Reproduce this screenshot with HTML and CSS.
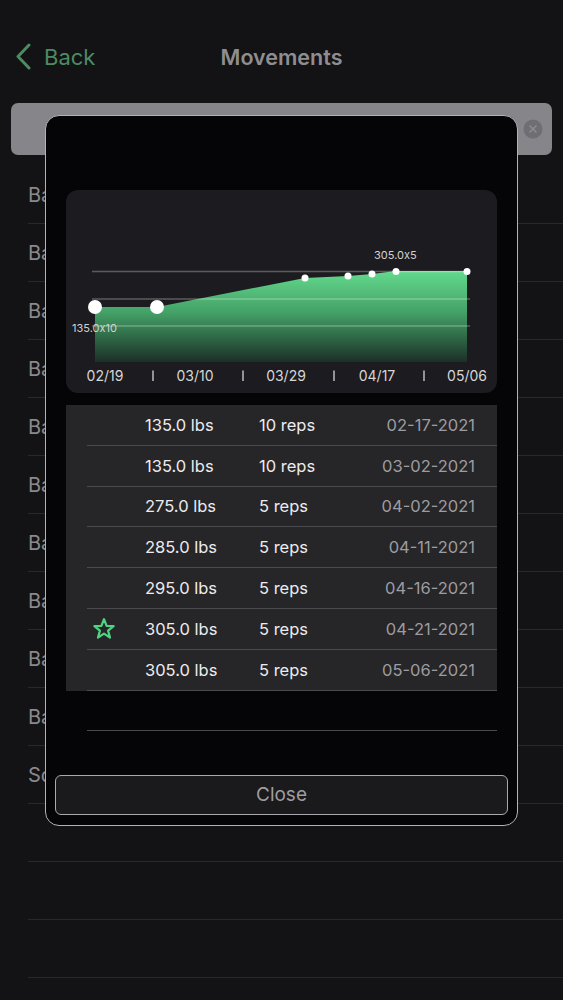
FILE: index.html
```html
<!DOCTYPE html>
<html>
<head>
<meta charset="utf-8">
<link rel="stylesheet" href="styles.css">
</head>
<body>
<div class="screen">
  <div class="status"></div>
  <div class="nav">
    <div class="back">
      <svg class="chev" width="18" height="28" viewBox="0 0 18 28"><path d="M14 2 L3 13.5 L14 25" fill="none" stroke="#4d8b62" stroke-width="3" stroke-linecap="round" stroke-linejoin="round"/></svg>
      <span>Back</span>
    </div>
    <div class="title">Movements</div>
  </div>
  <div class="searchwrap">
    <div class="search">
      <svg class="clear" width="20" height="20" viewBox="0 0 20 20"><circle cx="10" cy="10" r="9.5" fill="#6f6e73"/><path d="M6.5 6.5 L13.5 13.5 M13.5 6.5 L6.5 13.5" stroke="#8c8b90" stroke-width="1.6"/></svg>
    </div>
  </div>
  <div class="list">
    <div class="item"><span>Barbell Back Squat</span></div>
    <div class="item"><span>Barbell Bench Press</span></div>
    <div class="item"><span>Barbell Curl</span></div>
    <div class="item"><span>Barbell Deadlift</span></div>
    <div class="item"><span>Barbell Front Squat</span></div>
    <div class="item"><span>Barbell Hip Thrust</span></div>
    <div class="item"><span>Barbell Lunge</span></div>
    <div class="item"><span>Barbell Overhead Press</span></div>
    <div class="item"><span>Barbell Row</span></div>
    <div class="item"><span>Barbell Shrug</span></div>
    <div class="item"><span>Squat</span></div>
    <div class="item"><span></span></div>
    <div class="item"><span></span></div>
    <div class="item"><span></span></div>
  </div>
</div>

<div class="modal">
  <div class="chart">
    <svg width="431" height="203" viewBox="0 0 431 203">
      <defs>
        <linearGradient id="g" x1="0" y1="81" x2="0" y2="172" gradientUnits="userSpaceOnUse">
          <stop offset="0" stop-color="#63d98d"/>
          <stop offset="0.45" stop-color="#44a267"/>
          <stop offset="1" stop-color="#1b3027"/>
        </linearGradient>
      </defs>
      <path d="M29 117 L91 117 L239 88 L282 86 L306 84 L330 81 L401 81 L401 172 L29 172 Z" fill="url(#g)"/>
      <line x1="26" y1="81.5" x2="404" y2="81.5" stroke="rgba(255,255,255,0.28)" stroke-width="1.5"/>
      <line x1="26" y1="109" x2="404" y2="109" stroke="rgba(255,255,255,0.28)" stroke-width="1.5"/>
      <line x1="26" y1="136" x2="404" y2="136" stroke="rgba(255,255,255,0.28)" stroke-width="1.5"/>
      <circle cx="29" cy="117" r="7" fill="#fff"/>
      <circle cx="91" cy="117" r="7" fill="#fff"/>
      <circle cx="239" cy="88" r="3.5" fill="#fff"/>
      <circle cx="282" cy="86" r="3.5" fill="#fff"/>
      <circle cx="306" cy="84" r="3.5" fill="#fff"/>
      <circle cx="330" cy="81.5" r="3.5" fill="#fff"/>
      <circle cx="401" cy="81.5" r="3.5" fill="#fff"/>
      <text class="pt" x="6" y="142">135.0x10</text>
      <text class="pt" x="308" y="69">305.0x5</text>
      <text class="ax" x="39" y="191">02/19</text>
      <text class="ax" x="129" y="191">03/10</text>
      <text class="ax" x="220" y="191">03/29</text>
      <text class="ax" x="311" y="191">04/17</text>
      <text class="ax" x="401" y="191">05/06</text>
      <g stroke="#d6d6d8" stroke-width="1.3">
        <line x1="87" y1="180.5" x2="87" y2="191"/>
        <line x1="177" y1="180.5" x2="177" y2="191"/>
        <line x1="268" y1="180.5" x2="268" y2="191"/>
        <line x1="358" y1="180.5" x2="358" y2="191"/>
      </g>
    </svg>
  </div>

  <div class="table">
    <div class="row"><div class="mark"></div><div class="w">135.0 lbs</div><div class="r">10 reps</div><div class="d">02-17-2021</div></div>
    <div class="row"><div class="mark"></div><div class="w">135.0 lbs</div><div class="r">10 reps</div><div class="d">03-02-2021</div></div>
    <div class="row"><div class="mark"></div><div class="w">275.0 lbs</div><div class="r">5 reps</div><div class="d">04-02-2021</div></div>
    <div class="row"><div class="mark"></div><div class="w">285.0 lbs</div><div class="r">5 reps</div><div class="d">04-11-2021</div></div>
    <div class="row"><div class="mark"></div><div class="w">295.0 lbs</div><div class="r">5 reps</div><div class="d">04-16-2021</div></div>
    <div class="row"><div class="mark">
      <svg width="24" height="24" viewBox="0 0 24 24"><path d="M12 2.2 L14.6 8.9 L21.6 9.2 L16.1 13.6 L18 20.6 L12 16.6 L6 20.6 L7.9 13.6 L2.4 9.2 L9.4 8.9 Z" fill="none" stroke="#4fd482" stroke-width="2.2" stroke-linejoin="round"/></svg>
    </div><div class="w">305.0 lbs</div><div class="r">5 reps</div><div class="d">04-21-2021</div></div>
    <div class="row"><div class="mark"></div><div class="w">305.0 lbs</div><div class="r">5 reps</div><div class="d">05-06-2021</div></div>
  </div>
  <div class="emptyrow"></div>

  <div class="close">Close</div>
</div>
</body>
</html>
```

FILE: styles.css
```css
* { box-sizing: border-box; }
html, body { margin: 0; padding: 0; }
body {
  background: #131215;
  font-family: Inter, "Noto Sans", "Liberation Sans", sans-serif;
  width: 563px;
  height: 1000px;
  overflow: hidden;
  position: relative;
}
.screen { display: flex; flex-direction: column; }
.status { height: 20px; }
.nav {
  height: 74px;
  position: relative;
  display: flex;
  align-items: center;
  justify-content: center;
}
.back {
  position: absolute;
  left: 15px;
  top: 0;
  bottom: 0;
  display: flex;
  align-items: center;
  gap: 11px;
  color: #4d8b62;
  font-size: 22px;
}
.chev { display: block; }
.title {
  color: #8e8e91;
  font-size: 21.5px;
  font-weight: 600;
}
.searchwrap { padding: 9px 11px 11px 11px; }
.search {
  height: 52px;
  background: #86858a;
  border-radius: 7px;
  display: flex;
  align-items: center;
  justify-content: flex-end;
  padding-right: 9px;
}
.clear { display: block; }
.list { display: flex; flex-direction: column; }
.item {
  height: 58px;
  padding-left: 28px;
}
.item span {
  display: flex;
  align-items: center;
  height: 58px;
  border-bottom: 1.5px solid #29282b;
  color: #8a898d;
  font-size: 20px;
  white-space: nowrap;
}

.modal {
  position: absolute;
  left: 45px;
  top: 115px;
  width: 473px;
  height: 711px;
  background: #050407;
  border: 1.5px solid #b3b2b6;
  border-radius: 14px;
  padding: 74px 9px 0 9px;
  display: flex;
  flex-direction: column;
}
.chart {
  margin: 0 11px;
  height: 203px;
  background: #1c1b1f;
  border-radius: 12px;
  overflow: hidden;
}
.chart svg { display: block; }
.pt { fill: #d2d2d4; font-size: 11px; font-family: Inter, "Liberation Sans", sans-serif; }
.ax { fill: #d6d6d8; font-size: 14px; text-anchor: middle; font-family: Inter, "Liberation Sans", sans-serif; }

.table {
  margin: 12px 11px 0 11px;
  background: #262528;
}
.row {
  height: 40.8px;
  margin-left: 21px;
  border-bottom: 1.5px solid #4b4a4e;
  display: flex;
  align-items: center;
  font-size: 16.5px;
}
.mark { width: 58px; display: flex; align-items: center; padding-left: 5px; }
.mark svg { display: block; }
.w { width: 114px; color: #ececee; }
.r { flex: 1; color: #ececee; }
.d { color: #9d9ca0; padding-right: 22px; }
.emptyrow {
  height: 40px;
  margin: 0 11px 0 32px;
  border-bottom: 1.5px solid #4b4a4e;
}
.close {
  margin-top: 44px;
  height: 40px;
  border: 1.5px solid #a9a8ac;
  border-radius: 6px;
  background: #1a191c;
  color: #9e9da1;
  font-size: 19px;
  display: flex;
  align-items: center;
  justify-content: center;
}
```
